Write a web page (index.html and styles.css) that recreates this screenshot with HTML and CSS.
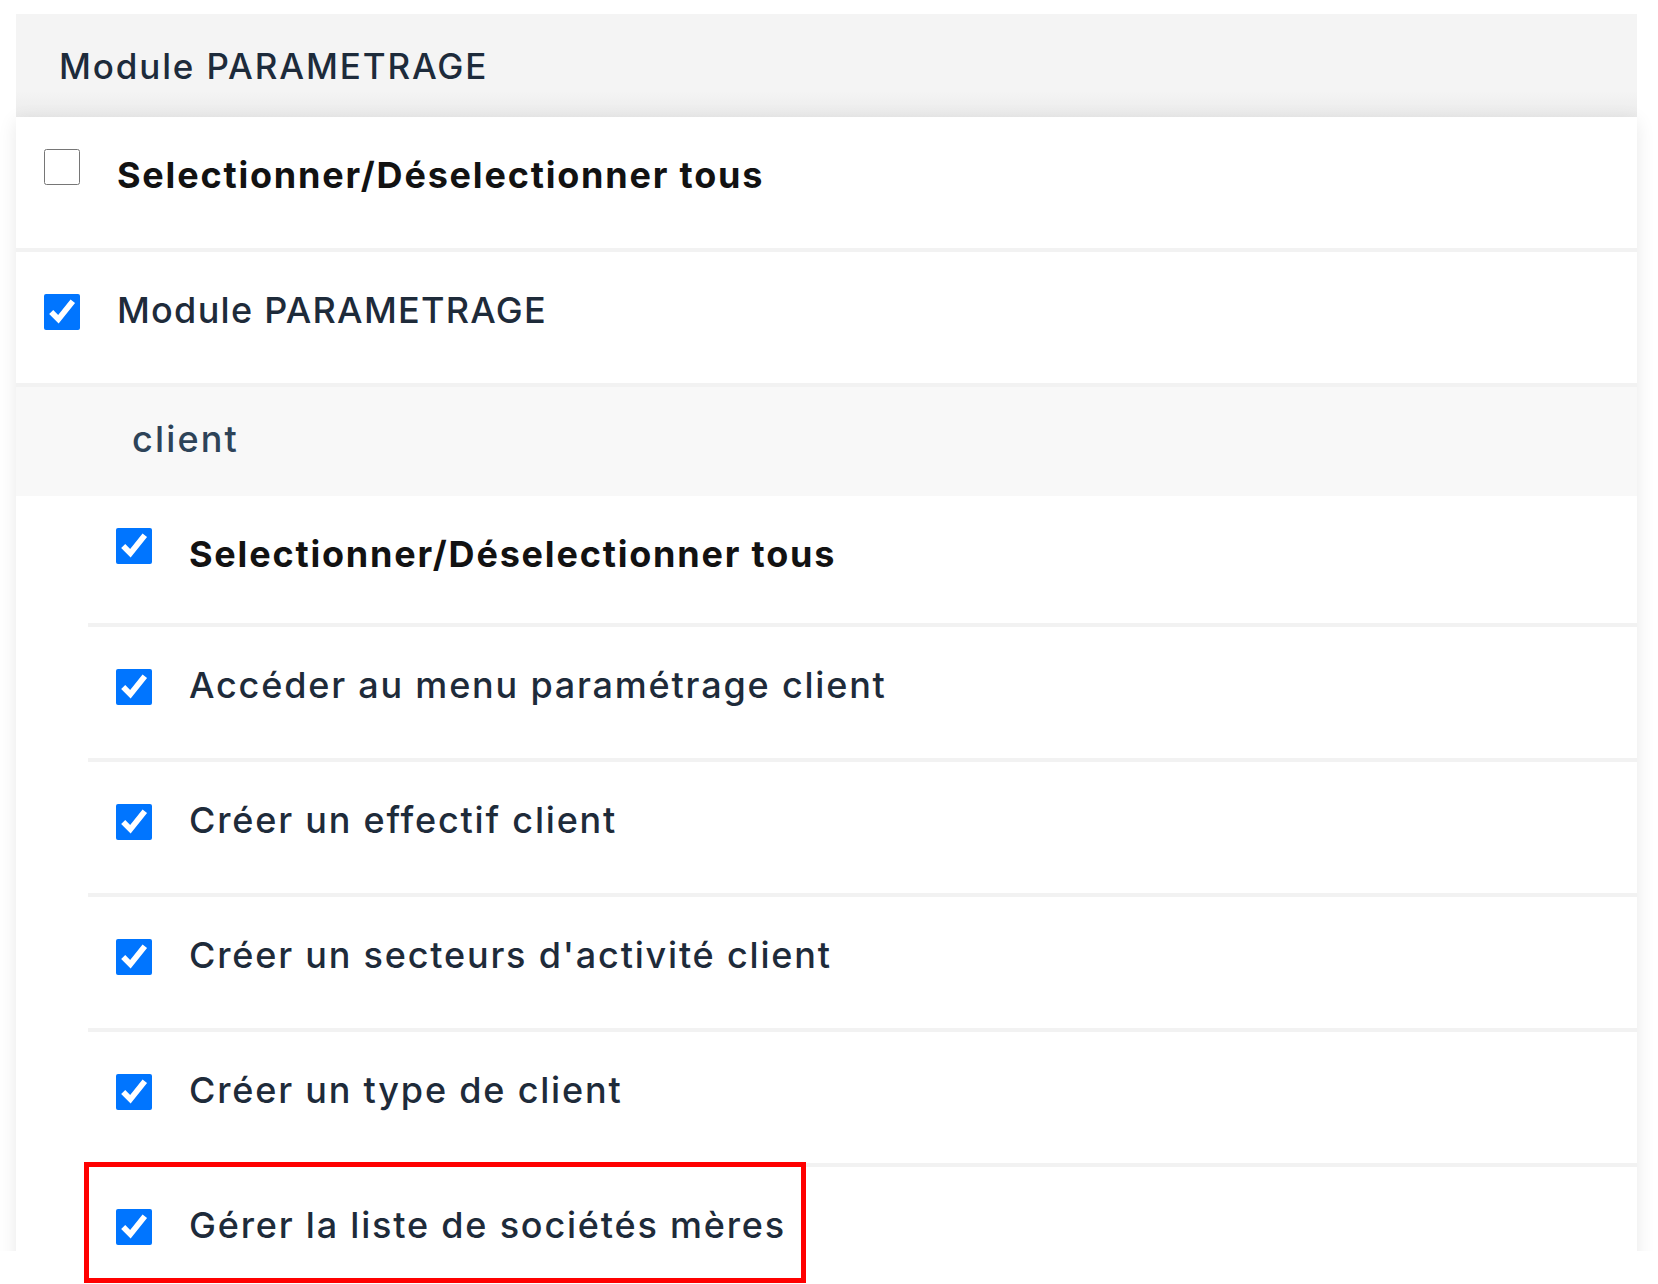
FILE: index.html
```html
<!DOCTYPE html>
<html lang="fr">
<head>
  <meta charset="UTF-8">
  <meta name="viewport" content="width=device-width, initial-scale=1.0">
  <title>Module PARAMETRAGE - droits</title>
  <link rel="stylesheet" href="styles.css">
</head>
<body>
  <div class="frame">
    <div class="card">
      <div class="card-header">Module PARAMETRAGE</div>
      <div class="card-body">
        <div class="row row-all">
          <input type="checkbox" id="all">
          <label for="all">Selectionner/Déselectionner tous</label>
        </div>
        <div class="row row-module">
          <input type="checkbox" id="mod" checked>
          <label for="mod">Module PARAMETRAGE</label>
        </div>

        <div class="group-title">client</div>
        <div class="sublist">
          <div class="row row-all">
            <input type="checkbox" id="c0" checked>
            <label for="c0">Selectionner/Déselectionner tous</label>
          </div>
          <div class="row">
            <input type="checkbox" id="c1" checked>
            <label for="c1">Accéder au menu paramétrage client</label>
          </div>
          <div class="row">
            <input type="checkbox" id="c2" checked>
            <label for="c2">Créer un effectif client</label>
          </div>
          <div class="row">
            <input type="checkbox" id="c3" checked>
            <label for="c3">Créer un secteurs d'activité client</label>
          </div>
          <div class="row">
            <input type="checkbox" id="c4" checked>
            <label for="c4">Créer un type de client</label>
          </div>
          <div class="row">
            <input type="checkbox" id="c5" checked>
            <label for="c5">Gérer la liste de sociétés mères</label>
          </div>
        </div>
      </div>
    </div>
  </div>

  <!-- annotation frame around the new right -->
  <div class="highlight"></div>
</body>
</html>
```

FILE: styles.css
```css
/* Basic Reset */
* { margin: 0; padding: 0; box-sizing: border-box; }
body {
  font-family: Inter, "Liberation Sans", sans-serif;
  background: #fff;
  color: #1e2b3a;
}
.frame {
  height: 1251px;
  overflow: hidden;
}
.card {
  margin: 14px 21px 0 16px;
}
.card-header {
  height: 103px;
  display: flex;
  align-items: center;
  padding: 0 0 0 43px;
  background: linear-gradient(#f4f4f4 75%, #ebebeb);
  font-size: 35px;
  font-weight: 500;
  letter-spacing: 0.053em;
  color: #1d2b3b;
}
.card-body {
  background: #fff;
  box-shadow: 0 4px 18px rgba(0,0,0,0.09);
  min-height: 1200px;
}
.row {
  height: 135px;
  display: flex;
  align-items: flex-start;
  padding-left: 28px;
  border-bottom: 4px solid #f2f2f2;
}
.row input {
  width: 36px;
  height: 36px;
  margin-top: 42px;
  flex: none;
}
.row label {
  margin: 36px 0 0 37px;
  font-size: 36px;
  line-height: 44px;
  font-weight: 500;
  letter-spacing: 0.05em;
  color: #1e2b3a;
}
.row-module label {
  letter-spacing: 0.035em;
}
.row-all input {
  margin-top: 32px;
}
.row-all label {
  font-weight: 700;
  letter-spacing: 0.05em;
  color: #121212;
}
.group-title {
  height: 109px;
  padding: 30px 0 0 116px;
  background: #f8f8f8;
  font-size: 36px;
  line-height: 44px;
  font-weight: 500;
  letter-spacing: 0.06em;
  color: #2d4358;
}
.sublist {
  margin-left: 72px;
}
.sublist .row:first-child {
  height: 131px;
}
.highlight {
  position: absolute;
  left: 84px;
  top: 1162px;
  width: 722px;
  height: 121px;
  border: 5px solid #f00;
}
```
